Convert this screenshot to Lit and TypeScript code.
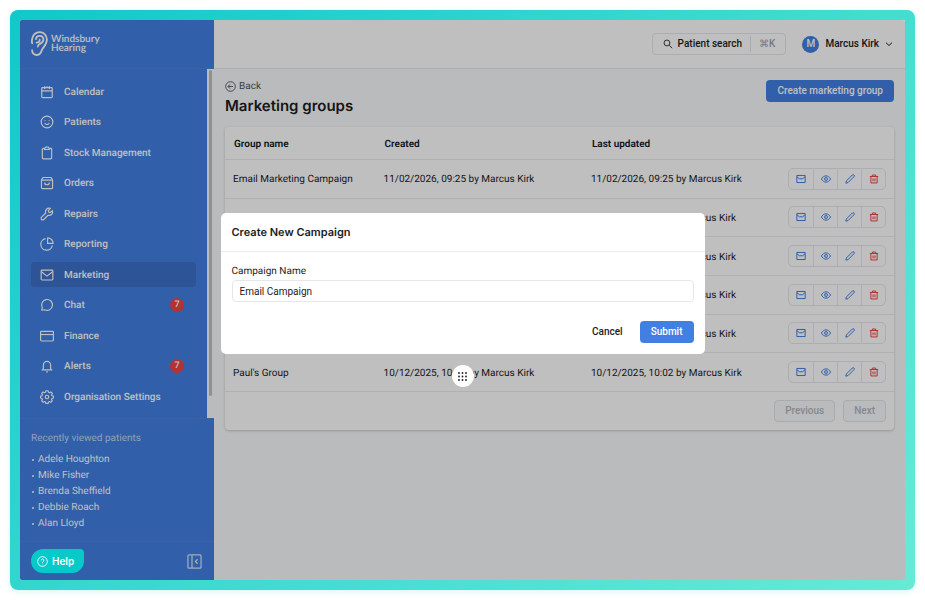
import { LitElement, html, css, svg, nothing } from "lit";
import { customElement, state } from "lit/decorators.js";
import { classMap } from "lit/directives/class-map.js";

const icons = {
  calendar: svg`<rect x="3" y="4.5" width="18" height="17" rx="1.5"/><path d="M3 10h18M8 2v5M16 2v5M12 2v3"/>`,
  smile: svg`<circle cx="12" cy="12" r="10"/><path d="M8 13.5c.8 2 2.200 3 4 3s3.200-1 4-3M8.500 8.500v1.500M15.500 8.500v1.500"/>`,
  clipboard: svg`<path d="M8 4H5.500A1.500 1.500 0 0 0 4 5.500v15A1.500 1.500 0 0 0 5.500 22h13a1.500 1.500 0 0 0 1.500-1.500v-15A1.500 1.500 0 0 0 18.500 4H16"/><path d="M9.500 2h5L16.500 6h-9z"/>`,
  bag: svg`<path d="M2.500 7v13A1.500 1.500 0 0 0 4 21.500h16a1.500 1.500 0 0 0 1.500-1.500V7L19 2.500H5z"/><path d="M2.500 7h19M8 11a4 4 0 0 0 8 0"/>`,
  wrench: svg`<path d="M21.300 6.200l-3.600 3.200-2.800-.5-.6-2.800 3.500-3.700a6.200 6.200 0 0 0-8 7.900L2.600 17.500a2.700 2.700 0 0 0 3.900 3.900l7.300-7.200a6.200 6.200 0 0 0 7.500-8z"/>`,
  pie: svg`<path d="M9.500 2.800A10 10 0 1 0 21.200 14.500"/><path d="M13 1.500V11h9.500A9.500 9.500 0 0 0 13 1.500z"/>`,
  mail: svg`<rect x="2" y="3.500" width="20" height="17" rx="1.500"/><path d="M2.500 6.500l9.500 7.500 9.500-7.500"/>`,
  chat: svg`<path d="M3 21l.9-4.800A9.300 9.300 0 1 1 8 20.200z"/>`,
  card: svg`<rect x="1" y="4" width="22" height="16.500" rx="1.500"/><path d="M1 9.500h22"/>`,
  bell: svg`<path d="M3 18.500h18M5 18.500c.9-2.500.9-4.500.9-8.300a6.100 6.100 0 0 1 12.200 0c0 3.800 0 5.800.9 8.300M10.500 22h3"/>`,
  gear: svg`<path d="M10.200 1.300h3.600l.7 2.500 1.800.8 2.300-1.300 2.500 2.500-1.300 2.300.8 1.800 2.500.7v3.200l-2.500.7-.8 1.800 1.300 2.300-2.500 2.500-2.300-1.300-1.800.8-.7 2.500h-3.600l-.7-2.500-1.800-.8-2.300 1.300-2.500-2.500 1.300-2.300-.8-1.800-2.500-.7v-3.200l2.500-.7.8-1.800-1.300-2.300 2.500-2.500 2.300 1.300 1.800-.8z"/><circle cx="12" cy="12" r="3"/>`,
  search: svg`<circle cx="9.500" cy="9.500" r="7"/><path d="M14.800 14.800L22 22"/>`,
  down: svg`<path d="M3 8l9 8.500L21 8"/>`,
  back: svg`<circle cx="12" cy="12" r="10.500"/><path d="M17.500 12H7M11 7.500L6.500 12l4.500 4.500"/>`,
  envelope: svg`<rect x="2" y="3.500" width="20" height="17"/><path d="M2.500 7l6 4.500h7l6-4.500"/>`,
  eye: svg`<path d="M1 12c2.800-5 6.500-7.500 11-7.500S20.200 7 23 12c-2.800 5-6.500 7.500-11 7.500S3.800 17 1 12z"/><circle cx="12" cy="12" r="3.500"/>`,
  pencil: svg`<path d="M2 22l1.300-5.300L17.500 2.500a2.700 2.700 0 0 1 4 4L7.300 20.700z"/>`,
  trash: svg`<path d="M2 6h20M8 6V2.500h8V6M4.500 6v15.500h15V6M9.700 10.500v7M14.300 10.500v7"/>`,
  help: svg`<circle cx="12" cy="12" r="10.500"/><path d="M9 9.700a3 3 0 1 1 4.300 2.700c-1 .5-1.300 1-1.300 2M12 16.800v1"/>`,
  collapse: svg`<rect x="1.500" y="1.500" width="21" height="21" rx="1.500"/><path d="M8 1.500v21M17 8.500L13.500 12l3.500 3.500"/>`,
};
type IconName = keyof typeof icons;

const icon = (name: IconName) =>
  html`<svg class="icon" viewBox="0 0 24 24" aria-hidden="true">${icons[name]}</svg>`;

interface NavItem {
  icon: IconName;
  label: string;
  badge?: number;
}

const NAV: NavItem[] = [
  { icon: "calendar", label: "Calendar" },
  { icon: "smile", label: "Patients" },
  { icon: "clipboard", label: "Stock Management" },
  { icon: "bag", label: "Orders" },
  { icon: "wrench", label: "Repairs" },
  { icon: "pie", label: "Reporting" },
  { icon: "mail", label: "Marketing" },
  { icon: "chat", label: "Chat", badge: 7 },
  { icon: "card", label: "Finance" },
  { icon: "bell", label: "Alerts", badge: 7 },
  { icon: "gear", label: "Organisation Settings" },
];

const RECENT = ["Adele Houghton", "Mike Fisher", "Brenda Sheffield", "Debbie Roach", "Alan Lloyd"];

const GROUPS = [
  { name: "Email Marketing Campaign", at: "11/02/2026, 09:25" },
  { name: "Newsletter", at: "21/1/2026, 11:32" },
  { name: "Upgrades", at: "21/1/2026, 11:30" },
  { name: "Annual Review", at: "12/12/2025, 9:05" },
  { name: "New Patients", at: "12/12/2025, 9:04" },
  { name: "Paul's Group", at: "10/12/2025, 10:02" },
];

const ACTIONS: { icon: IconName; label: string }[] = [
  { icon: "envelope", label: "Email" },
  { icon: "eye", label: "View" },
  { icon: "pencil", label: "Edit" },
  { icon: "trash", label: "Delete" },
];

const base = css`
  * {
    box-sizing: border-box;
  }
  button,
  input {
    font: inherit;
    color: inherit;
    margin: 0;
  }
  button {
    padding: 0;
    border: 0;
    background: none;
    cursor: pointer;
  }
  a {
    color: inherit;
    text-decoration: none;
  }
  ul {
    list-style: none;
    margin: 0;
    padding: 0;
  }
  .icon {
    display: block;
    flex: none;
    fill: none;
    stroke: currentColor;
    stroke-width: 2;
    stroke-linejoin: round;
  }
`;

@customElement("side-bar")
class SideBar extends LitElement {
  static styles = [
    base,
    css`
      :host {
        display: flex;
        flex-direction: column;
        background: #427fe2;
        color: #fff;
      }
      .brand {
        display: flex;
        align-items: center;
        gap: 3px;
        height: 49px;
        padding: 0 11px 1px;
        border-bottom: 1px solid #4c83e0;
        font: 600 10px/9px Lato, sans-serif;
      }
      .ear {
        display: block;
        width: 17px;
        height: 25px;
        fill: none;
        stroke: #fff;
        stroke-width: 1.8;
        stroke-linecap: round;
      }
      .menu {
        display: flex;
        flex: 1;
      }
      nav {
        flex: 1;
        display: flex;
      }
      .items {
        flex: 1;
        display: flex;
        flex-direction: column;
        justify-content: space-between;
        padding: 10px 11px 9px;
      }
      .item {
        display: flex;
        align-items: center;
        gap: 10px;
        height: 25px;
        padding: 0 12px 0 9px;
        border-radius: 4px;
        font-weight: 500;
      }
      .item .icon {
        width: 14px;
        height: 14px;
      }
      .label {
        padding-top: 2px;
      }
      .item.active {
        background: #3c71c8;
      }
      .badge {
        display: grid;
        place-items: center;
        width: 14px;
        height: 14px;
        margin-left: auto;
        border-radius: 50%;
        background: #ef4444;
        font-size: 9px;
      }
      .track {
        width: 7px;
        padding: 1px 2px;
        background: #fafafa;
      }
      .thumb {
        height: 94%;
        border-radius: 2px;
        background: #c1c1c1;
      }
      .recent {
        padding: 12px 11px 9px;
        border-top: 1px solid #4c83e0;
        line-height: 16px;
      }
      .title {
        margin: 0 0 5px;
        font-weight: 400;
        font-size: 10px;
        color: #c3d5f5;
      }
      .recent a {
        display: flex;
        align-items: center;
        gap: 4px;
        margin-left: 1px;
      }
      .recent a::before {
        content: "";
        width: 2px;
        height: 2px;
        border-radius: 1px;
        background: currentColor;
      }
      .foot {
        display: flex;
        align-items: center;
        justify-content: space-between;
        height: 39px;
        padding: 0 12px 0 11px;
        border-top: 1px solid #4c83e0;
      }
      .help {
        position: relative;
        z-index: 2;
        display: flex;
        align-items: center;
        gap: 4px;
        height: 24px;
        padding: 0 10px 0 6px;
        border-radius: 12px 4px 12px 12px;
        background: #06c9c9;
        font-family: Inter, sans-serif;
        font-weight: 600;
      }
      .help .icon {
        width: 11px;
        height: 11px;
      }
      .fold {
        opacity: 0.8;
      }
      .fold .icon {
        width: 15px;
        height: 15px;
      }
    `,
  ];

  @state() private current = "Marketing";

  render() {
    return html`
      <div class="brand">
        <svg class="ear" viewBox="0 0 17 25" aria-hidden="true">
          <path d="M1.200 12.300C.8 11 .8 9.800 1 8.600 1.800 4.200 4.800 1.200 8.700 1.200c4.200 0 7.200 3.200 7.200 7.400 0 3.600-1.800 6-3.700 8.200-1.300 1.500-1.600 2.900-2.200 4.300-.8 1.800-2.200 2.900-4.200 2.900-2.800 0-4.700-2-4.700-4.800"/>
          <path d="M5 8.200c.2-2 1.700-3.300 3.700-3.300 2.200 0 3.700 1.600 3.700 3.600 0 2.300-1.500 3.300-3 4.100-1.500.8-2.600 1.500-2.600 2.900M8.700 8.600c.3 1.700-1 3-3.200 3.100"/>
        </svg>
        <span>Windsbury<br />Hearing</span>
      </div>
      <div class="menu">
        <nav aria-label="Main">
          <ul class="items">
            ${NAV.map(
              (n) => html`<li>
                <a
                  href="#"
                  class=${classMap({ item: true, active: n.label === this.current })}
                  @click=${() => (this.current = n.label)}
                >
                  ${icon(n.icon)}<span class="label">${n.label}</span>
                  ${n.badge ? html`<span class="badge">${n.badge}</span>` : nothing}
                </a>
              </li>`
            )}
          </ul>
        </nav>
        <div class="track"><div class="thumb"></div></div>
      </div>
      <section class="recent">
        <h2 class="title">Recently viewed patients</h2>
        <ul>
          ${RECENT.map((p) => html`<li><a href="#">${p}</a></li>`)}
        </ul>
      </section>
      <div class="foot">
        <button class="help">${icon("help")}Help</button>
        <button class="fold" aria-label="Collapse sidebar">${icon("collapse")}</button>
      </div>
    `;
  }
}

@customElement("top-bar")
class TopBar extends LitElement {
  static styles = [
    base,
    css`
      :host {
        display: flex;
        align-items: center;
        justify-content: flex-end;
        gap: 16px;
        height: 49px;
        padding: 0 12px;
        border-bottom: 1px solid #ebebec;
        background: #fff;
        font-weight: 500;
        color: #1c1c1e;
      }
      .search {
        display: flex;
        align-items: center;
        height: 22px;
        padding: 0 10px;
        border: 1px solid #e5e7eb;
        border-radius: 4px;
        background: #fff;
      }
      .search .icon {
        width: 10px;
        height: 10px;
        margin-right: 5px;
      }
      .key {
        margin-left: 8px;
        padding-left: 8px;
        border-left: 1px solid #e5e7eb;
        line-height: 16px;
        color: #9ca3af;
      }
      .user {
        display: flex;
        align-items: center;
        gap: 6px;
      }
      .avatar {
        display: grid;
        place-items: center;
        width: 17px;
        height: 17px;
        border-radius: 50%;
        background: #427fe2;
        color: #fff;
      }
      .user .icon {
        width: 8px;
        height: 8px;
        stroke-width: 3;
      }
    `,
  ];

  render() {
    return html`
      <button class="search">
        ${icon("search")}<span>Patient search</span><span class="key">⌘K</span>
      </button>
      <button class="user">
        <span class="avatar">M</span><span>Marcus Kirk</span>${icon("down")}
      </button>
    `;
  }
}

@customElement("group-table")
class GroupTable extends LitElement {
  static styles = [
    base,
    css`
      :host {
        display: block;
        border-radius: 4px;
        background: #fff;
        box-shadow: 0 1px 3px rgba(0, 0, 0, 0.2);
        color: #1c1c1e;
      }
      table {
        width: 100%;
        height: 265px;
        table-layout: fixed;
        border-collapse: separate;
        border-spacing: 0;
      }
      .name {
        width: 22.5%;
      }
      .date {
        width: 31%;
      }
      th,
      td {
        padding: 3px 8px 0;
        border-bottom: 1px solid #ececee;
        text-align: left;
        white-space: nowrap;
      }
      th {
        height: 33px;
        padding-left: 9px;
        font-weight: 600;
        color: #111827;
      }
      td.tools {
        padding-top: 0;
      }
      .actions {
        display: flex;
        width: max-content;
        margin-left: auto;
        border: 1px solid #e5e7eb;
        border-radius: 5px;
        color: #427fe2;
      }
      .actions button {
        display: grid;
        place-items: center;
        width: 24px;
        height: 20px;
      }
      .actions button + button {
        border-left: 1px solid #e5e7eb;
      }
      .actions button:last-child {
        color: #ef4444;
      }
      .actions .icon {
        width: 10px;
        height: 10px;
        stroke-width: 2.4;
      }
      .pager {
        display: flex;
        justify-content: flex-end;
        gap: 8px;
        padding: 8px;
      }
      .pager button {
        height: 22px;
        padding: 0 10px;
        border: 1px solid #e3e4e6;
        border-radius: 4px;
        background: #f9fafb;
        font-weight: 500;
        color: #b4b6ba;
      }
    `,
  ];

  render() {
    return html`
      <table>
        <thead>
          <tr>
            <th class="name" scope="col">Group name</th>
            <th class="date" scope="col">Created</th>
            <th scope="col">Last updated</th>
            <th scope="col" aria-label="Actions"></th>
          </tr>
        </thead>
        <tbody>
          ${GROUPS.map(
            (g) => html`<tr>
              <td>${g.name}</td>
              <td>${g.at} by Marcus Kirk</td>
              <td>${g.at} by Marcus Kirk</td>
              <td class="tools">
                <div class="actions">
                  ${ACTIONS.map((a) => html`<button aria-label="${a.label} ${g.name}">${icon(a.icon)}</button>`)}
                </div>
              </td>
            </tr>`
          )}
        </tbody>
      </table>
      <div class="pager">
        <button disabled>Previous</button>
        <button disabled>Next</button>
      </div>
    `;
  }
}

@customElement("app-root")
class AppRoot extends LitElement {
  static styles = [
    base,
    css`
      :host {
        display: flex;
        min-height: 100vh;
        box-sizing: border-box;
        padding: 10px;
        background: #fff;
        font: 400 10px/14px Roboto, sans-serif;
        text-rendering: geometricPrecision;
        color: #1c1c1e;
      }
      .frame {
        flex: 1;
        display: flex;
        padding: 10px;
        border-radius: 8px;
        background: linear-gradient(135deg, #10c9c9, #67ead6);
        box-shadow: 0 2px 6px rgba(80, 220, 205, 0.2);
      }
      .app {
        position: relative;
        flex: 1;
        display: grid;
        grid-template-columns: 194px 1fr;
        border-radius: 2px;
        overflow: hidden;
        background: #f9fafb;
      }
      .page {
        padding: 11px;
      }
      .head {
        display: flex;
        justify-content: space-between;
        align-items: flex-start;
        margin-bottom: 11px;
      }
      .back {
        display: flex;
        align-items: center;
        gap: 3px;
        line-height: 13px;
        color: #4b5563;
      }
      .back .icon {
        width: 11px;
        height: 11px;
      }
      h1 {
        margin: 3px 0 0;
        font: 600 15px/20px Inter, sans-serif;
      }
      .primary {
        height: 22px;
        padding: 0 11px;
        border-radius: 4px;
        background: #427fe2;
        font-weight: 500;
        color: #fff;
      }
      .shade {
        position: absolute;
        inset: 0;
        z-index: 1;
        background: rgba(0, 0, 0, 0.25);
      }
      dialog {
        position: absolute;
        z-index: 3;
        top: 193px;
        width: 484px;
        max-width: 90%;
        margin: 0 auto;
        padding: 0;
        border: 0;
        border-radius: 5px;
        background: #fff;
        color: #1c1c1e;
      }
      h2 {
        margin: 0;
        padding: 12px 11px;
        border-bottom: 1px solid #ececee;
        font: 600 11px/14px Inter, sans-serif;
      }
      form {
        padding: 13px 11px 11px;
      }
      label {
        display: block;
        margin-bottom: 1px;
      }
      input {
        display: block;
        width: 100%;
        height: 22px;
        padding: 0 7px;
        border: 1px solid #e5e7eb;
        border-radius: 4px;
        background: #fff;
        outline: 0;
      }
      .choices {
        display: flex;
        justify-content: flex-end;
        gap: 6px;
        margin-top: 19px;
      }
      .plain {
        padding: 0 11px;
        font-weight: 500;
      }
      .fab {
        position: absolute;
        z-index: 4;
        top: 345px;
        left: calc(50% - 11px);
        display: grid;
        place-items: center;
        width: 22px;
        height: 22px;
        border-radius: 50%;
        background: #fff;
      }
      .dots {
        display: block;
        width: 9px;
        height: 9px;
        fill: #1c1c1e;
      }
    `,
  ];

  @state() private campaign = "Email Campaign";

  render() {
    return html`
      <div class="frame">
        <div class="app">
          <side-bar></side-bar>
          <div>
            <top-bar></top-bar>
            <main class="page">
              <div class="head">
                <div>
                  <a class="back" href="#">${icon("back")}Back</a>
                  <h1>Marketing groups</h1>
                </div>
                <button class="primary">Create marketing group</button>
              </div>
              <group-table></group-table>
            </main>
          </div>
          <div class="shade"></div>
          <dialog open aria-labelledby="title">
            <h2 id="title">Create New Campaign</h2>
            <form @submit=${(e: Event) => e.preventDefault()}>
              <label for="campaign">Campaign Name</label>
              <input
                id="campaign"
                type="text"
                .value=${this.campaign}
                @input=${(e: Event) => (this.campaign = (e.target as HTMLInputElement).value)}
              />
              <div class="choices">
                <button type="button" class="plain">Cancel</button>
                <button type="submit" class="primary">Submit</button>
              </div>
            </form>
          </dialog>
          <button class="fab" aria-label="More">
            <svg class="dots" viewBox="0 0 9 9" aria-hidden="true">
              ${[1, 4.5, 8].map((y) => [1, 4.5, 8].map((x) => svg`<circle cx=${x} cy=${y} r="0.9"/>`))}
            </svg>
          </button>
        </div>
      </div>
    `;
  }
}
